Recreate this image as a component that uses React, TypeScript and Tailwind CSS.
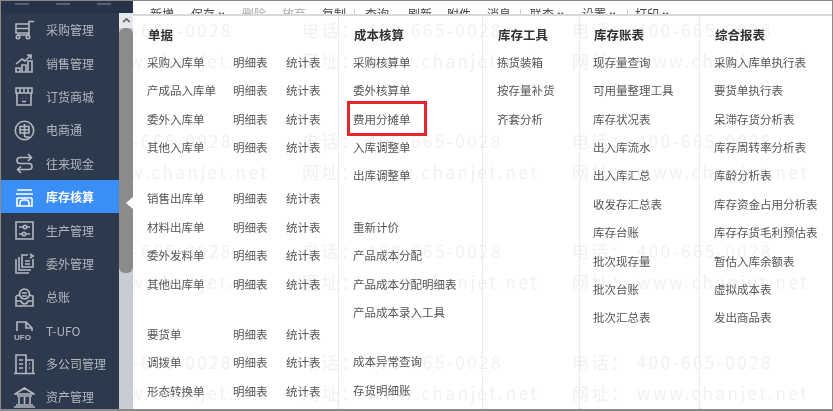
import React from "react";

const FONT = "[font-family:'Noto_Sans_CJK_SC','Noto_Sans',sans-serif]";

const NavIcon: React.FC<{ name: string }> = ({ name }) => {
  const shapes: Record<string, React.ReactNode> = {
    cart: (
      <>
        <path d="M2 4h13v9H2zM2 8.5h13M15 13v2H3M15 4V1.5h5" />
        <circle cx="4" cy="17" r="1.7" />
        <circle cx="14" cy="17" r="1.7" />
      </>
    ),
    chart: (
      <>
        <path d="M2 19v-4h4v4zM8 19v-7h4v7zM14 19V8h4v11zM2 11l6-5 3 2 6-6M13 2h4v4" />
      </>
    ),
    store: (
      <>
        <path d="M2 2h16v5H2zM3 7v12h14V7M6 2v5M10 2v5M14 2v5" />
        <path d="M8 12h.5M12 12h.5M8 15.5h4" />
      </>
    ),
    ec: (
      <>
        <circle cx="10.5" cy="10.5" r="9.2" />
        <path d="M6 6.5h9v6.5H6zM6 9.7h9M10.5 4v11.5q0 1.5 2 1.5h3" />
      </>
    ),
    loop: (
      <>
        <path d="M14 1l3.5 3.5L14 8M17 4.5H6q-3 0-3 3t3 3h9q3 0 3 3t-3 3H4M7 13.5L3.5 16.5 7 20" />
      </>
    ),
    stock: (
      <>
        <path d="M3 3h15M2 7h17M3 11v8h15v-8M6 19v-3q0-3 3-3h3q3 0 3 3v3M3 11h15" />
      </>
    ),
    prod: (
      <>
        <path d="M2 2h17v17H2zM5 7h4M13 7h3M5 14h3M12 14h4" />
        <circle cx="11" cy="7" r="1.7" />
        <circle cx="10" cy="14" r="1.7" />
      </>
    ),
    out: (
      <>
        <path d="M5 4v13h12M2 6v14h13M8 8V2h6M8 8v6h11V6M11 8h5M11 11h5M16 1l3 2-3 2" />
      </>
    ),
    ledger: (
      <>
        <path d="M2 9v10h17V9l-4-1M6 8l-4 1M2 14h5q1 3 3.5 3t3.5-3h5" />
        <path d="M10.5 2a5 5 0 1 1 -.01 0zM8 6h5M8 9h5" />
      </>
    ),
    ufo: (
      <>
        <path d="M3 11V2h9l6 6v3M12 2v6h6" />
      </>
    ),
    corp: (
      <>
        <path d="M2 19V1h10v18M12 6h7v13M0 19.5h21M5 6h4M5 10h4M5 14h4M15 10h1M15 14h1" />
      </>
    ),
    bank: (
      <>
        <path d="M10.5 1L1 7h19zM3 9h15M5 10v7M10.5 10v7M16 10v7M2 18h17M0 20h21" />
      </>
    ),
  };
  return (
    <svg
      viewBox="0 0 21 21"
      fill="none"
      stroke="currentColor"
      strokeWidth={1.6}
      className="relative h-[21px] w-[21px] shrink-0"
    >
      {shapes[name]}
      {name === "ufo" && (
        <text x="0" y="20" fontSize="8" fontWeight="700" fill="currentColor" stroke="none" fontFamily="Liberation Sans">
          UFO
        </text>
      )}
    </svg>
  );
};

const navItems = [
  { icon: "cart", label: "采购管理" },
  { icon: "chart", label: "销售管理" },
  { icon: "store", label: "订货商城" },
  { icon: "ec", label: "电商通" },
  { icon: "loop", label: "往来现金" },
  { icon: "stock", label: "库存核算", active: true },
  { icon: "prod", label: "生产管理" },
  { icon: "out", label: "委外管理" },
  { icon: "ledger", label: "总账" },
  { icon: "ufo", label: "T-UFO" },
  { icon: "corp", label: "多公司管理" },
  { icon: "bank", label: "资产管理" },
];

const toolbar = [
  { label: "新增", w: "w-[41px]" },
  { label: "保存", w: "w-[51px]", caret: true },
  { label: "删除", w: "w-[40px]", faded: true },
  { label: "放弃", w: "w-[40px]", faded: true },
  { label: "复制", w: "w-[43px]", sep: "left-[32px]" },
  { label: "查询", w: "w-[43px]" },
  { label: "刷新", w: "w-[39px]" },
  { label: "附件", w: "w-[40px]" },
  { label: "消息", w: "w-[43px]", sep: "left-[33px]" },
  { label: "联查", w: "w-[52px]", caret: true },
  { label: "设置", w: "w-[53px]", caret: true, sep: "left-[45px]" },
  { label: "打印", w: "w-[50px]", caret: true },
];

const billGroups = [
  { gap: "mb-[23px]", rows: ["采购入库单", "产成品入库单", "委外入库单", "其他入库单"] },
  { gap: "mb-[22px]", rows: ["销售出库单", "材料出库单", "委外发料单", "其他出库单"] },
  { gap: "", rows: ["要货单", "调拨单", "形态转换单"] },
];

const costGroups = [
  { gap: "mb-[23px]", rows: ["采购核算单", "委外核算单", "费用分摊单", "入库调整单", "出库调整单"] },
  { gap: "mb-[21px]", rows: ["重新计价", "产品成本分配", "产品成本分配明细表", "产品成本录入工具"] },
  { gap: "", rows: ["成本异常查询", "存货明细账"] },
];

const stockTools = ["拣货装箱", "按存量补货", "齐套分析"];

const ledgers = ["现存量查询", "可用量整理工具", "库存状况表", "出入库流水", "出入库汇总", "收发存汇总表", "库存台账", "批次现存量", "批次台账", "批次汇总表"];

const reports = ["采购入库单执行表", "要货单执行表", "呆滞存货分析表", "库存周转率分析表", "库龄分析表", "库存资金占用分析表", "库存存货毛利预估表", "暂估入库余额表", "虚拟成本表", "发出商品表"];

const Row: React.FC<{ children: React.ReactNode }> = ({ children }) => (
  <div className="relative flex h-[28.4px] items-center whitespace-nowrap">{children}</div>
);

const Title: React.FC<{ children: React.ReactNode }> = ({ children }) => (
  <h3 className="flex h-[32.3px] items-center pl-px pt-[7px] text-[12.5px] font-bold text-[#333]">{children}</h3>
);

const Column: React.FC<{ title: string; className: string; children: React.ReactNode }> = ({ title, className, children }) => (
  <div className={`border-r border-dotted border-[#d8d8d8] ${className}`}>
    <Title>{title}</Title>
    {children}
  </div>
);

const Watermark = () => (
  <div className="absolute inset-0 flex flex-col gap-[55.5px] overflow-hidden pt-[17px] text-[17px] tracking-[2.5px] text-[#f1f1f1]">
    {[0, 1, 2, 3].map((i) => (
      <div key={i} className="ml-[-101px] flex flex-col gap-[7px] whitespace-nowrap">
        <div className="flex h-[24px] items-center">
          {[0, 1, 2].map((j) => (
            <span key={j} className="w-[270px] shrink-0">电话： 400-665-0028</span>
          ))}
        </div>
        <div className="flex h-[24px] items-center">
          {[0, 1, 2].map((j) => (
            <span key={j} className="w-[270px] shrink-0">网址： www.chanjet.net</span>
          ))}
        </div>
      </div>
    ))}
  </div>
);

export default function App() {
  return (
    <div className={`flex h-[411px] w-[833px] overflow-hidden border border-b-2 border-[#8a8a8a] bg-white blur-[0.45px] ${FONT}`}>
      <aside className="flex w-[118px] shrink-0 flex-col overflow-hidden bg-[#2d3a4d] text-[12px] text-[#b3b8c0]">
        <div className="flex h-[12px] shrink-0 gap-[27px] bg-[#263349] pl-[14px] pt-[2px]">
          <span className="h-[2px] w-[14px] bg-[#566173]" />
          <span className="h-[2px] w-[14px] bg-[#566173]" />
          <span className="h-[2px] w-[14px] bg-[#566173]" />
        </div>
        {navItems.map((item) => (
          <div
            key={item.label}
            className={`flex h-[33.4px] shrink-0 items-center gap-[11px] pl-[13px] pt-px ${item.active ? "bg-[#3a8ef6] font-bold text-white" : ""}`}
          >
            <NavIcon name={item.icon} />
            <span>{item.label}</span>
          </div>
        ))}
      </aside>

      <div className="relative flex w-[14px] shrink-0 flex-col bg-[#c9ccd2]">
        <div className="h-[12px] shrink-0 bg-[#263349]" />
        <div className="flex h-[15px] shrink-0 items-center justify-center bg-[#e6e8eb] text-[#666]">
          <svg viewBox="0 0 10 6" className="h-[5px] w-[9px]" fill="none" stroke="currentColor" strokeWidth={2}>
            <path d="M1 5l4-4 4 4" />
          </svg>
        </div>
        <div className="h-[245px] shrink-0 rounded-[6px] bg-[#8b8b8d]" />
        <div className="absolute left-[7px] top-[196px] h-0 w-0 border-y-[6px] border-r-[7px] border-y-transparent border-r-white" />
      </div>

      <main className="relative flex min-w-0 flex-1 flex-col overflow-hidden">
        <Watermark />
        <div className="relative flex h-[15px] shrink-0 items-start overflow-hidden border-b-2 border-[#d9d9d9] pl-[17px] pt-[5px] text-[12px] leading-[16px] text-[#444]">
          {toolbar.map((t) => (
            <span key={t.label} className={`relative flex shrink-0 items-center gap-[3px] ${t.w} ${t.faded ? "text-[#aaa]" : ""}`}>
              {t.label}
              {t.caret && (
                <svg viewBox="0 0 8 5" className="h-[4px] w-[7px]" fill="none" stroke="currentColor" strokeWidth={1.6}>
                  <path d="M1 1l3 3 3-3" />
                </svg>
              )}
              {t.sep && <i className={`absolute top-[3px] h-[10px] w-px bg-[#ccc] ${t.sep}`} />}
            </span>
          ))}
        </div>

        <div className="relative flex flex-1 text-[11.5px] text-[#555]">
          <Column title="单据" className="w-[206px] pl-[14px]">
            {billGroups.map((group, i) => (
              <div key={i} className={group.gap}>
                {group.rows.map((name) => (
                  <Row key={name}>
                    <span className="w-[86px]">{name}</span>
                    <span className="w-[53px]">明细表</span>
                    <span>统计表</span>
                  </Row>
                ))}
              </div>
            ))}
          </Column>

          <Column title="成本核算" className="w-[144px] pl-[14px]">
            {costGroups.map((group, i) => (
              <div key={i} className={group.gap}>
                {group.rows.map((name) => (
                  <Row key={name}>
                    {name}
                    {name === "费用分摊单" && (
                      <span className="absolute left-[-6px] top-[-4px] h-[35px] w-[80px] border-[3px] border-[#e8262a]" />
                    )}
                  </Row>
                ))}
              </div>
            ))}
          </Column>

          <Column title="库存工具" className="w-[97px] pl-[14px]">
            {stockTools.map((name) => (
              <Row key={name}>{name}</Row>
            ))}
          </Column>

          <Column title="库存账表" className="w-[120px] pl-[13px]">
            {ledgers.map((name) => (
              <Row key={name}>{name}</Row>
            ))}
          </Column>

          <div className="flex-1 pl-[14px]">
            <Title>综合报表</Title>
            {reports.map((name) => (
              <Row key={name}>{name}</Row>
            ))}
          </div>
        </div>
      </main>
    </div>
  );
}
